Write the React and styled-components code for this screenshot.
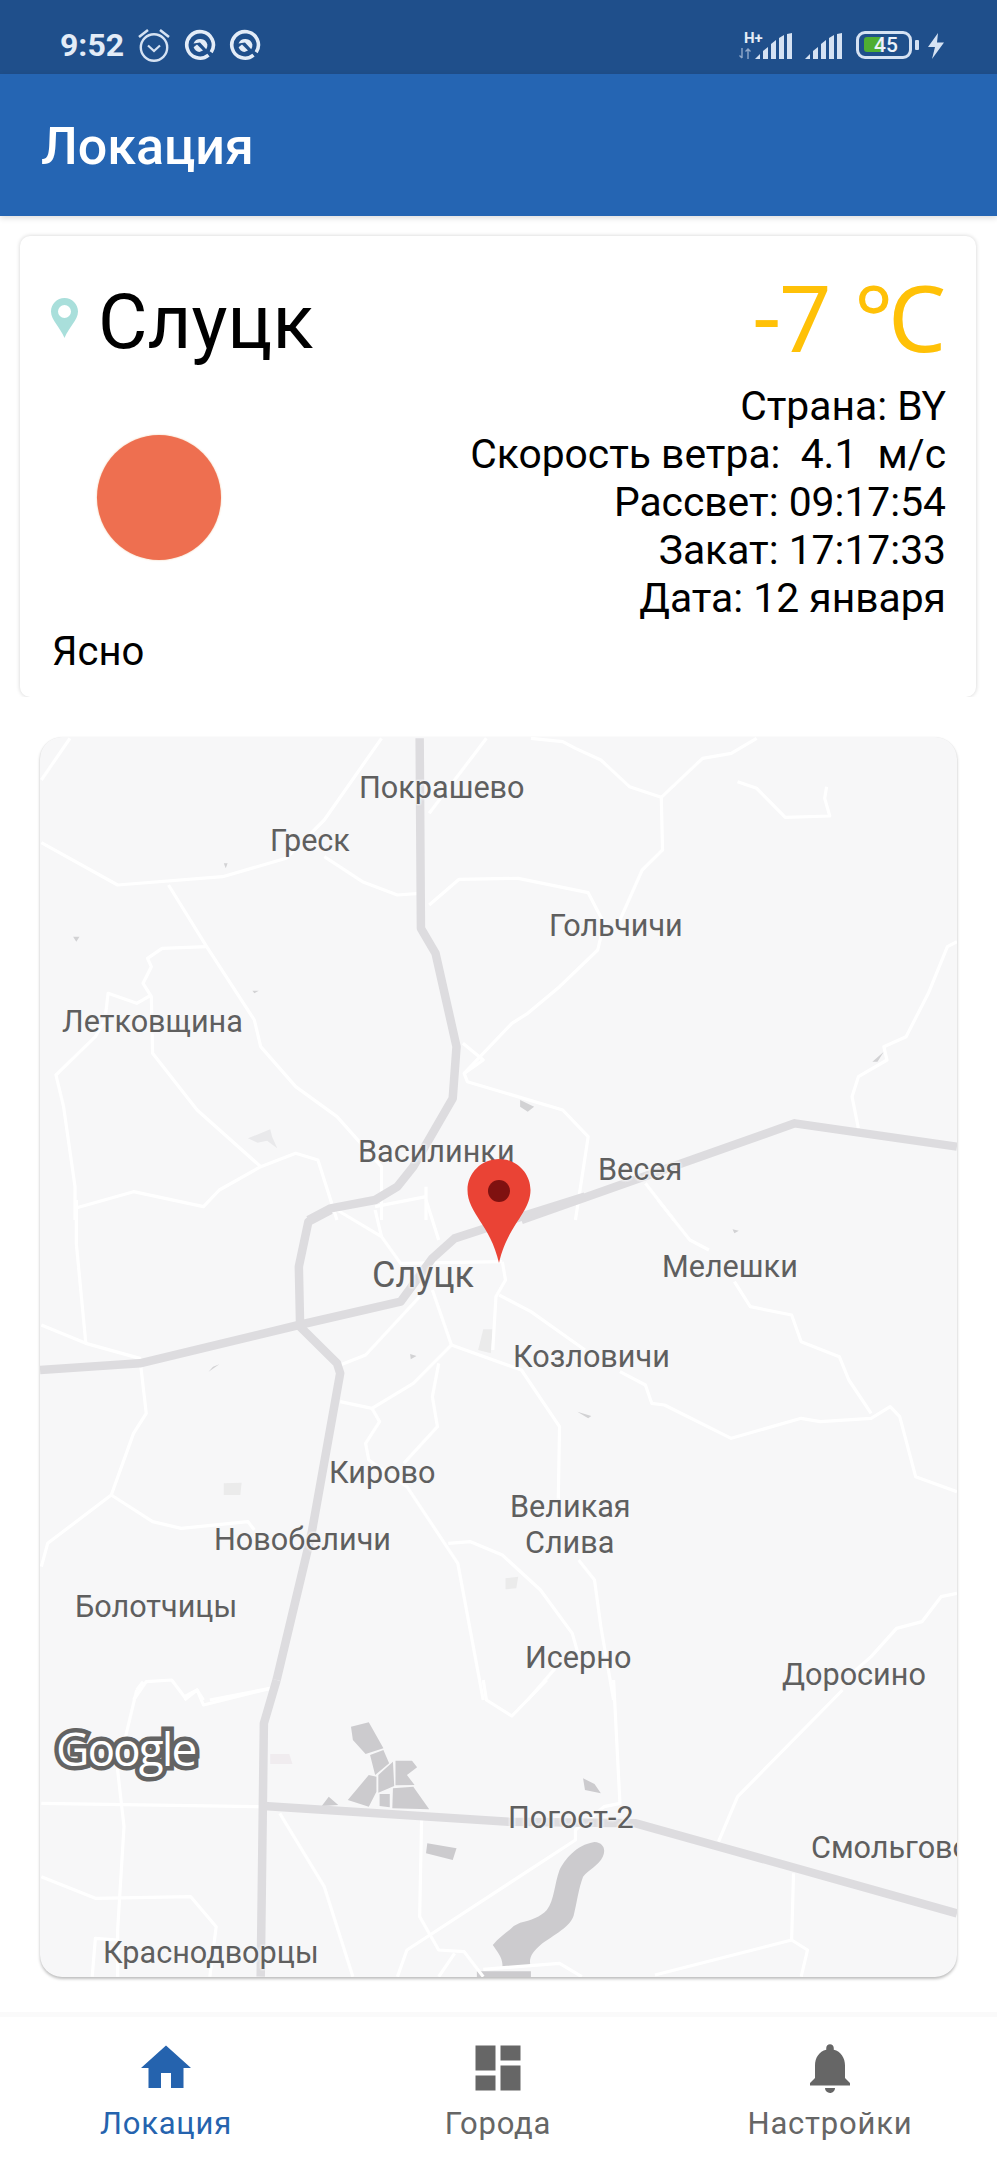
import styled, { createGlobalStyle } from 'styled-components';

import { MdDashboard, MdHome, MdNotifications } from 'react-icons/md';

const GlobalStyle = createGlobalStyle`
  html, body {
    margin: 0;
    padding: 0;
    background: #fff;
    font-family: Roboto, "Liberation Sans", sans-serif;
  }
`;

// zoom crops were 1568px wide for 997px and 3x tall, so road points stay in those units
const band = (top) => `translate(0 ${top}) scale(${997 / 1568} ${1 / 3})`;

const minorRoads = [
  { top: 720, paths: [
    'M65 180 L110 55',
    'M65 368 L185 495 L350 470 L450 415 L510 300 L600 55',
    'M265 495 L325 680 L400 900 L410 980 L465 1100 L530 1190 L600 1340 L600 1500',
    'M325 680 L255 685 L232 715 L238 740 L225 790 L238 830 L240 1000 L310 1170 L410 1340 L465 1300 L500 1320 L530 1500',
    'M238 825 L215 850 L170 820 L165 900 L150 950 L88 1065 L100 1160 L118 1400 L118 1500',
    'M510 410 L570 485 L625 525 L660 520',
    'M675 555 L722 478 L815 475 L925 518 L950 610 L940 690 L880 800 L830 880 L805 910 L730 1060 L735 1085 L885 1170 L925 1250 L905 1500',
    'M675 280 L765 55',
    'M835 55 L885 65 L905 85 L945 120 L990 200 L1040 232 L1105 115 L1150 100 L1190 55',
    'M1040 232 L1042 390 L1010 450 L975 600',
    'M1160 185 L1190 205 L1235 292 L1305 288 L1297 235 L1300 200',
    'M1505 665 L1490 680 L1460 820 L1425 950 L1390 980 L1395 1020 L1350 1070 L1340 1130 L1350 1225',
    'M118 1465 L210 1415 L320 1460 L345 1410 L410 1340',
    'M1015 1390 L1060 1500',
    'M670 1430 L590 1460',
    'M670 1400 L670 1500',
    'M728 970 L760 1020 L730 1060',
  ] },
  { top: 1200, paths: [
    'M120 0 L120 130 L135 430',
    'M65 375 L135 430 L220 475 L230 640 L210 700 L175 885 L75 1030 L65 1100',
    'M175 885 L240 965 L285 985 L390 965 L400 990',
    'M530 30 L600 110 L630 190 L790 185',
    'M590 30 L600 110',
    'M670 0 L690 120',
    'M680 270 L710 435',
    'M660 290 L575 465 L535 495',
    'M710 435 L650 550 L585 625 L535 605',
    'M585 625 L597 665 L575 730 L580 780 L640 860 L720 1090 L760 1500',
    'M710 435 L820 510 L880 680 L878 900',
    'M690 490 L680 590 L688 680 L635 790',
    'M790 185 L795 240 L780 290 L775 450',
    'M785 285 L835 335 L920 450',
    'M975 515 L1015 555 L1025 610 L1045 615 L1150 715 L1260 655 L1290 665 L1370 655 L1400 620 L1415 650 L1440 830 L1505 875',
    'M1035 0 L1085 120 L1115 150',
    'M1155 245 L1180 320 L1245 345 L1260 425 L1320 470 L1335 540 L1370 640',
    'M705 1030 L740 1025 L790 1065 L850 1170 L900 1300 L915 1400',
    'M910 1080 L935 1140 L945 1280 L965 1500',
    'M830 1500 L880 1390',
    'M1505 1180 L1480 1190 L1450 1265 L1410 1285 L1370 1370 L1340 1420',
    'M210 1500 L230 1445 L270 1440 L290 1490 L310 1470 L320 1500',
    'M330 1500 L425 1465',
  ] },
  { top: 1680, paths: [
    'M215 30 L225 5',
    'M215 30 L185 270 L195 440 L185 750 L185 890',
    'M290 60 L310 30 L320 75 L425 25',
    'M65 370 L410 380',
    'M440 400 L510 620 L555 890',
    'M663 420 L660 710 L690 810 L730 815 L760 890',
    'M760 0 L765 60 L805 108 L860 0',
    'M965 0 L975 370 L950 380 L905 450 L905 480 L640 810 L625 890',
    'M1325 30 L1160 350 L1130 485',
    'M1248 580 L1245 780 L1270 810 L1260 890',
    'M1245 780 L1030 885',
    'M65 590 L150 655 L300 650 L340 740 L330 890',
    'M145 890 L150 775 L185 780',
    'M690 890 L715 820',
    'M760 868 L880 850 L915 890',
  ] },
];

const majorRoads = [
  { top: 720, paths: [
    'M660 55 L662 625 L685 700 L718 980 L712 1135 L650 1340 L625 1400 L590 1440 L520 1465 L485 1500',
    'M820 1500 L1250 1210 L1505 1280',
  ] },
  { top: 1200, paths: [
    'M520 30 L485 65 L470 200 L472 380 L530 490 L535 520 L490 1000 L435 1440',
    'M920 -10 L820 50 L715 115 L680 175 L630 305 L470 375 L220 490 L63 510',
  ] },
  { top: 1680, paths: [
    'M435 0 L415 130 L410 890',
    'M415 378 L800 425 L1000 430 L1505 700',
  ] },
];

const patches = [
  { top: 720, fill: '#d2d2d4', d: 'M352 430 L358 430 L355 445 Z M115 650 L125 650 L120 665 Z M397 812 L407 812 L400 820 Z M1372 1025 L1390 995 L1380 1025 Z M818 1140 L840 1160 L830 1175 L818 1160 Z' },
  { top: 720, fill: '#e9e9eb', d: 'M390 1255 L425 1228 L428 1250 L436 1285 L420 1262 L405 1268 Z' },
  { top: 1200, fill: '#ebebeb', d: 'M760 388 L775 388 L772 460 L752 450 Z M352 850 L380 848 L378 885 L352 885 Z M795 1135 L815 1130 L812 1165 L795 1168 Z' },
  { top: 1200, fill: '#d2d2d4', d: 'M1152 88 L1162 92 L1155 100 Z M645 462 L655 468 L646 478 Z M328 515 L345 493 L335 500 Z M908 635 L930 648 L925 655 Z' },
  { top: 1680, fill: '#f0ecef', d: 'M425 222 L455 222 L460 252 L425 252 Z' },
  { top: 1680, fill: '#cccbce', d: 'M552 140 L580 127 L603 205 L575 222 L555 180 Z M582 225 L603 210 L612 250 L590 285 Z M622 242 L648 242 L656 262 L640 285 L652 315 L622 316 Z M618 245 L620 318 L595 338 L595 285 Z M580 285 L592 290 L592 335 L580 380 L547 360 Z M597 342 L613 342 L613 382 L597 378 Z M618 325 L650 320 L675 388 L617 385 Z M517 350 L532 375 L506 378 Z M672 490 L718 505 L712 540 L670 520 Z M917 295 L935 312 L945 340 L920 330 Z' },
  { top: 1680, fill: '#cccbce', d: 'M935 486 C950 488 953 510 948 530 C942 555 925 570 917 590 C910 625 908 660 903 700 C900 740 870 765 850 795 C838 815 830 835 835 860 L790 860 C792 835 780 810 775 795 C785 770 800 755 808 738 L818 728 C835 722 850 710 860 690 C872 660 872 610 880 570 C888 540 905 495 935 486 Z M750 874 L835 874 L835 892 L750 892 Z' },
];

// x and baseline, in page pixels
const places = [
  { name: 'Покрашево', x: 359, y: 798 },
  { name: 'Греск', x: 270, y: 851 },
  { name: 'Гольчичи', x: 549, y: 936 },
  { name: 'Летковщина', x: 62, y: 1032 },
  { name: 'Василинки', x: 358, y: 1162 },
  { name: 'Весея', x: 598, y: 1180 },
  { name: 'Слуцк', x: 372, y: 1287, big: true },
  { name: 'Мелешки', x: 662, y: 1277 },
  { name: 'Козловичи', x: 513, y: 1367 },
  { name: 'Кирово', x: 329, y: 1483 },
  { name: 'Великая', x: 510, y: 1517 },
  { name: 'Слива', x: 525, y: 1553 },
  { name: 'Новобеличи', x: 214, y: 1550 },
  { name: 'Болотчицы', x: 75, y: 1617 },
  { name: 'Исерно', x: 525, y: 1668 },
  { name: 'Доросино', x: 782, y: 1685 },
  { name: 'Погост-2', x: 508, y: 1828 },
  { name: 'Смольгово', x: 811, y: 1858 },
  { name: 'Краснодворцы', x: 103, y: 1963 },
];

const details = [
  'Страна: BY',
  'Скорость ветра:  4.1  м/с',
  'Рассвет: 09:17:54',
  'Закат: 17:17:33',
  'Дата: 12 января',
];

const tabs = [
  { label: 'Локация', Icon: MdHome, active: true },
  { label: 'Города', Icon: MdDashboard },
  { label: 'Настройки', Icon: MdNotifications },
];

function QIcon() {
  return (
    <StatusSvg width="32" height="32" viewBox="0 0 32 32">
      <path d="M24.5 26.2 A13.3 13.3 0 1 1 27.2 23.2" fill="none" stroke="#e3ecf7" strokeWidth="3.6" />
      <path d="M9.5 14.5 A7.4 7.4 0 0 1 23.4 15.5 A7.4 7.4 0 0 1 22.2 20.2 L16 13.6 Z" fill="#e3ecf7" />
      <path d="M9.6 18.2 L13 15.4 L19 21.4 L15.4 23 A7.4 7.4 0 0 1 9.6 18.2 Z" fill="#e3ecf7" />
    </StatusSvg>
  );
}

function Bars() {
  return (
    <StatusSvg width="37" height="26" viewBox="0 0 37 26">
      <path d="M0 26 L5 21 V26 Z" fill="#d5e2f3" />
      <path d="M8 26 V18 L13 14 V26 Z M16 26 V11 L21 7 V26 Z M24 26 V5 L29 2 V26 Z M32 26 V1 L37 0 V26 Z" fill="#d5e2f3" />
    </StatusSvg>
  );
}

function App() {
  return (
    <Screen>
      <GlobalStyle />
      <StatusBar>
        <StatusGroup>
          <Clock>9:52</Clock>
          <StatusSvg width="34" height="34" viewBox="0 0 34 34">
            <circle cx="17" cy="19.5" r="13.2" fill="none" stroke="#d5e2f3" strokeWidth="2.4" />
            <path d="M11 17.5 L17 23 L23 17.5" fill="none" stroke="#d5e2f3" strokeWidth="2.2" />
            <path d="M2 9 L11 2 M23 2 L32 9" fill="none" stroke="#d5e2f3" strokeWidth="2.6" />
          </StatusSvg>
          <QIcon />
          <QIcon />
        </StatusGroup>
        <RightStatus>
          <NetworkTag>
            <NetworkLabel>H+</NetworkLabel>
            <StatusSvg width="12" height="11" viewBox="0 0 12 11">
              <path d="M3 0 V10 M0.5 7.5 L3 10 M9 11 V1 M6.5 3.5 L9 1 L11.5 3.5" fill="none" stroke="#8fa8ca" strokeWidth="1.4" />
            </StatusSvg>
          </NetworkTag>
          <BarsSlot>
            <Bars />
          </BarsSlot>
          <BarsSlot $gap={13}>
            <Bars />
          </BarsSlot>
          <Battery>
            <BatteryFill />
            <BatteryText>45</BatteryText>
          </Battery>
          <BatteryNub />
          <StatusSvg width="18" height="26" viewBox="0 0 18 26">
            <path d="M11 0 L1 14 H8 L5 26 L17 9.5 H10 Z" fill="#d5e2f3" />
          </StatusSvg>
        </RightStatus>
      </StatusBar>

      <AppBar>Локация</AppBar>

      <Card>
        <CardLeft>
          <CityRow>
            <PinIcon viewBox="0 0 27 40" width="27" height="40">
              <path
                fillRule="evenodd"
                d="M13.5 0 C6 0 0 6 0 13.5 C0 22 9 29 13.5 40 C18 29 27 22 27 13.5 C27 6 21 0 13.5 0 Z M13.5 7 A6.5 6.5 0 1 1 13.5 20 A6.5 6.5 0 1 1 13.5 7 Z"
                fill="#a9dfdb"
              />
            </PinIcon>
            <City>Слуцк</City>
          </CityRow>
          <Sun />
          <Condition>Ясно</Condition>
        </CardLeft>
        <CardRight>
          <Temperature>-7 ℃</Temperature>
          {details.map((line) => (
            <DetailLine key={line}>{line}</DetailLine>
          ))}
        </CardRight>
      </Card>

      <MapCard>
        <MapSvg viewBox="40 737 917 1240" width="917" height="1240">
          {patches.map((patch) => (
            <path key={patch.d} d={patch.d} fill={patch.fill} transform={band(patch.top)} />
          ))}
          {minorRoads.map((group) => (
            <g key={group.top} transform={band(group.top)} fill="none" stroke="#fff" strokeWidth="3.2" strokeLinejoin="round">
              {group.paths.map((d) => (
                <path key={d} d={d} vectorEffect="non-scaling-stroke" />
              ))}
            </g>
          ))}
          {majorRoads.map((group) => (
            <g key={group.top} transform={band(group.top)} fill="none" stroke="#dddcdf" strokeWidth="8.5" strokeLinejoin="round">
              {group.paths.map((d) => (
                <path key={d} d={d} vectorEffect="non-scaling-stroke" />
              ))}
            </g>
          ))}
        </MapSvg>
        {places.map((place) => (
          <Place key={place.name} $x={place.x} $y={place.y} $big={place.big}>
            {place.name}
          </Place>
        ))}
        <GoogleMark>Google</GoogleMark>
        <MapPin viewBox="0 0 64 105" width="64" height="105">
          <path
            d="M32 0 C14.500 0 0.500 14 0.500 31 C0.500 54 23.500 66 32 104 C40.500 66 63.500 54 63.500 31 C63.500 14 49.500 0 32 0 Z"
            fill="#ea4335"
          />
          <circle cx="32" cy="32" r="11" fill="#7f1110" />
        </MapPin>
      </MapCard>

      <TabBar>
        {tabs.map(({ label, Icon, active }) => (
          <Tab key={label} $active={active}>
            <Icon size={60} />
            <TabLabel>{label}</TabLabel>
          </Tab>
        ))}
      </TabBar>
    </Screen>
  );
}

const Screen = styled.div`
  display: flex;
  flex-direction: column;
  width: 997px;
  height: 2160px;
  overflow: hidden;
  background: #fff;
`;

const StatusBar = styled.div`
  display: flex;
  align-items: center;
  justify-content: space-between;
  height: 74px;
  padding: 15px 52px 0 60px;
  box-sizing: border-box;
  background: #1f4f8b;
`;

const StatusGroup = styled.div`
  display: flex;
  align-items: center;
  gap: 13px;
`;

const RightStatus = styled.div`
  display: flex;
  align-items: flex-end;
`;

const StatusSvg = styled.svg`
  display: block;
  flex-shrink: 0;
`;

const Clock = styled.span`
  font-size: 32px;
  font-weight: 700;
  line-height: 32px;
  color: #e3ecf7;
`;

const NetworkTag = styled.div`
  display: flex;
  flex-direction: column;
  width: 16px;
  gap: 3px;
`;

const NetworkLabel = styled.span`
  font-size: 15px;
  font-weight: 700;
  line-height: 14px;
  color: #e3ecf7;
  white-space: nowrap;
  margin-left: 5px;
`;

const BarsSlot = styled.div`
  margin-left: ${(props) => props.$gap || 0}px;
`;

const Battery = styled.div`
  position: relative;
  display: flex;
  align-items: center;
  width: 56px;
  height: 28px;
  margin: 0 3px 0 14px;
  padding-left: 5px;
  box-sizing: border-box;
  border: 3px solid #d5e2f3;
  border-radius: 9px;
`;

const BatteryFill = styled.div`
  width: 17px;
  height: 15px;
  border-radius: 3px 0 0 3px;
  background: #4fae32;
`;

const BatteryText = styled.span`
  position: absolute;
  left: 15px;
  top: 1px;
  font-size: 21px;
  font-weight: 500;
  line-height: 21px;
  color: #eef3fa;
`;

const BatteryNub = styled.div`
  width: 4px;
  height: 10px;
  margin: 0 8px 9px 0;
  border-radius: 1px;
  background: #d5e2f3;
`;

const AppBar = styled.div`
  position: relative;
  display: flex;
  align-items: center;
  height: 142px;
  padding: 2px 0 0 41px;
  box-sizing: border-box;
  font-size: 52px;
  font-weight: 500;
  color: #fff;
  background: #2565b3;
  box-shadow: 0 2px 6px rgba(0, 0, 0, 0.14);
`;

const Card = styled.div`
  display: flex;
  justify-content: space-between;
  width: 956px;
  margin: 20px 0 0 20px;
  padding: 40px 30px 21px 32px;
  box-sizing: border-box;
  border-radius: 10px;
  background: #fff;
  box-shadow: 0 0 4px rgba(0, 0, 0, 0.18);
  clip-path: inset(-8px -8px 0 -8px);
`;

const CardLeft = styled.div`
  display: flex;
  flex-direction: column;
`;

const CityRow = styled.div`
  display: flex;
  align-items: flex-start;
  gap: 20px;
  margin: 8px 0 0 -1px;
`;

const PinIcon = styled.svg`
  display: block;
  margin-top: 14px;
`;

const City = styled.span`
  font-size: 76px;
  line-height: 76px;
  color: #000;
`;

const Sun = styled.div`
  width: 124px;
  height: 125px;
  margin: 75px 0 0 45px;
  border-radius: 50%;
  background: #ee6f50;
  box-shadow: 0 0 2px rgba(240, 190, 150, 0.9);
  filter: blur(0.6px);
`;

const Condition = styled.div`
  margin-top: 68px;
  font-size: 40px;
  line-height: 48px;
  color: #000;
`;

const CardRight = styled.div`
  display: flex;
  flex-direction: column;
  align-items: flex-end;
`;

const Temperature = styled.div`
  margin-bottom: 16px;
  font-size: 92px;
  line-height: 90px;
  color: #ffc107;
`;

const DetailLine = styled.div`
  font-size: 40.8px;
  line-height: 48px;
  color: #000;
  white-space: pre;
`;

const MapCard = styled.div`
  position: relative;
  width: 917px;
  height: 1240px;
  margin: 40px 0 0 40px;
  overflow: hidden;
  border-radius: 22px;
  background: #f7f7f8;
  box-shadow: 0 2px 3px rgba(0, 0, 0, 0.25), 0 0 1px rgba(0, 0, 0, 0.08);
`;

const MapSvg = styled.svg`
  display: block;
`;

const Place = styled.span`
  position: absolute;
  left: ${(props) => props.$x - 40}px;
  top: ${(props) => props.$y - 737 - (props.$big ? 30 : 25)}px;
  font-size: ${(props) => (props.$big ? 36 : 30.6)}px;
  line-height: 1;
  color: #5f5f5f;
  white-space: nowrap;
  text-shadow: 0 0 3px #f7f7f8, 0 0 3px #f7f7f8, 0 0 3px #f7f7f8;
`;

const GoogleMark = styled.span`
  position: absolute;
  left: 16px;
  top: 986px;
  font-family: "Open Sans", Roboto, sans-serif;
  font-size: 46px;
  font-weight: 500;
  line-height: 50px;
  letter-spacing: -2px;
  color: #fff;
  -webkit-text-stroke: 9px #636363;
  paint-order: stroke fill;
`;

const MapPin = styled.svg`
  position: absolute;
  left: 427px;
  top: 422px;
`;

const TabBar = styled.div`
  display: grid;
  grid-template-columns: repeat(3, 332px);
  flex: 1;
  margin-top: 35px;
  padding-top: 21px;
  border-top: 5px solid #fafafa;
  box-sizing: border-box;
  background: #fff;
`;

const Tab = styled.div`
  display: flex;
  flex-direction: column;
  align-items: center;
  color: ${(props) => (props.$active ? '#2563ae' : '#666')};
`;

const TabLabel = styled.span`
  margin-top: 6px;
  font-size: 31px;
  line-height: 40px;
  letter-spacing: 0.8px;
`;

export default App;
